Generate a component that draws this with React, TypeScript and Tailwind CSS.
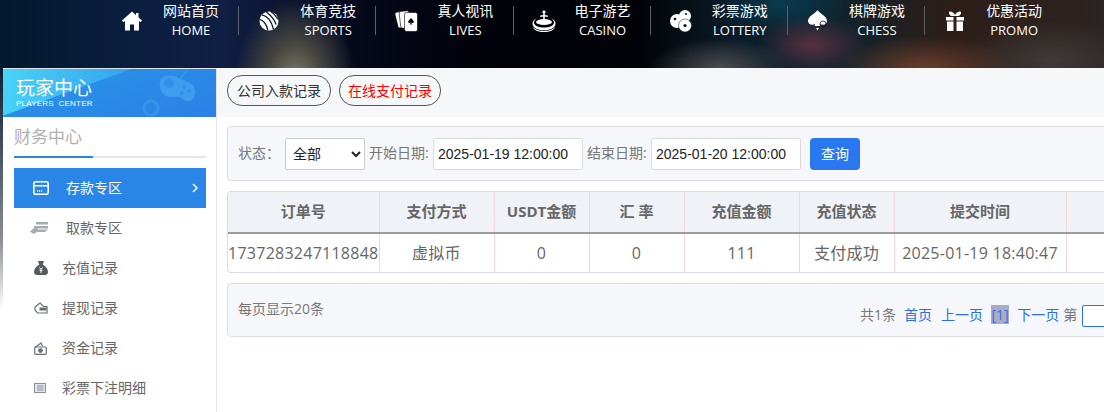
import React from "react";

const W = "fill-white";

const HomeIcon = () => (
  <svg width="20" height="20" viewBox="0 0 20 20" className={W}>
    <path d="M10 .5 0 9.6l1.500 1.600L3 10v9.500h5v-6h4v6h5V10l1.500 1.200L20 9.600 16.500 6.400V2h-2.500v2.200z" />
  </svg>
);
const SportsIcon = () => (
  <svg width="20" height="20" viewBox="0 0 20 20">
    <circle cx="10" cy="10" r="9.500" className={W} />
    <path d="M3 3.800c4.500 1 9.500 5.600 11.500 14.500M7.500 1c3 2.500 8 6.500 9.500 12.500M.8 8.500c3.500 1 6.500 4 8 10.500M12 .8c2.500 1.500 5 4 7 7.500" fill="none" stroke="#0b1022" strokeWidth="1.300" />
  </svg>
);
const LiveIcon = () => (
  <svg width="23" height="22" viewBox="0 0 23 22">
    <rect x="1.500" y="1.500" width="10" height="16" rx="2" transform="rotate(-14 6 10)" className={W} stroke="#000" strokeWidth="0.600" />
    <rect x="5" y="1" width="10" height="17" rx="2" transform="rotate(-7 10 10)" className={W} stroke="#000" strokeWidth="0.600" />
    <rect x="9.500" y="2.500" width="13" height="19" rx="2" className={W} stroke="#000" strokeWidth="0.600" />
    <path d="M16 8c1.200 1.600 2.800 2.400 2.800 3.900 0 1.200-1.600 1.500-2.400.6l.5 2h-1.800l.5-2c-.8.9-2.400.6-2.400-.6 0-1.500 1.600-2.300 2.800-3.900z" fill="#000" />
  </svg>
);
const CasinoIcon = () => (
  <svg width="24" height="22" viewBox="0 0 24 22" className={W}>
    <path d="M12 .5a1.500 1.500 0 0 1 .8 2.800V5l3 .6V7l-3-.4V10h-1.600V6.600l-3 .4V5.600l3-.6V3.300A1.500 1.500 0 0 1 12 .5z" />
    <ellipse cx="12" cy="12" rx="8" ry="3" />
    <path d="M.5 13.500C.5 10.800 3 9 5.500 8.300c-2.200 1-3.600 2.700-3.600 4.200 0 3 4.500 5 10.100 5s10.100-2 10.100-5c0-1.500-1.400-3.200-3.600-4.200 2.500.7 5 2.500 5 5.200 0 4-5 6.800-11.500 6.800S.5 17.500.5 13.500z" />
    <path d="M1 17c2 2.500 6 4 11 4s9-1.500 11-4c-.5 3-5 5-11 5S1.500 20 1 17z" />
  </svg>
);
const LotteryIcon = () => (
  <svg width="22" height="22" viewBox="0 0 22 22">
    <circle cx="15" cy="6" r="6" className={W} />
    <circle cx="7" cy="11" r="7" className={W} />
    <circle cx="15" cy="15.500" r="6.500" className={W} stroke="#06121e" strokeWidth="0.500" />
    <circle cx="5" cy="9" r="1.300" fill="#06121e" />
    <circle cx="16" cy="4" r="1" fill="#06121e" />
    <circle cx="15" cy="15.500" r="1.600" fill="#06121e" />
  </svg>
);
const ChessIcon = () => (
  <svg width="20" height="21" viewBox="0 0 20 21">
    <path d="M9.500 0c2 3.500 9.500 6 9.500 11 0 3.500-4 4.500-7 3l.5 2h-6l.5-2C4 15.500 0 14.500 0 11 0 6 7.500 3.500 9.500 0z" className={W} />
    <circle cx="15" cy="14" r="3" fill="none" stroke="#1d1418" strokeWidth="0.800" />
    <path d="M8 18h3l-1.500 2.500z" className={W} />
  </svg>
);
const GiftIcon = () => (
  <svg width="18" height="20" viewBox="0 0 18 20" className={W}>
    <path d="M4 .5c2 0 4 1.500 5 3.500 1-2 3-3.500 5-3.500 1 0 1.500 1.500.5 3L13 5H5L3.500 3.500C2.500 2 3 .5 4 .5z" />
    <path d="M0 6h7.500v3.500H0zM10.500 6H18v3.500h-7.500zM1 10.500h6.500V20H1zM10.500 10.500H17V20h-6.500z" />
  </svg>
);

const nav = [
  { zh: "网站首页", en: "HOME", icon: <HomeIcon /> },
  { zh: "体育竞技", en: "SPORTS", icon: <SportsIcon /> },
  { zh: "真人视讯", en: "LIVES", icon: <LiveIcon /> },
  { zh: "电子游艺", en: "CASINO", icon: <CasinoIcon /> },
  { zh: "彩票游戏", en: "LOTTERY", icon: <LotteryIcon /> },
  { zh: "棋牌游戏", en: "CHESS", icon: <ChessIcon /> },
  { zh: "优惠活动", en: "PROMO", icon: <GiftIcon /> },
];

const Gamepad = () => (
  <svg width="80" height="48" viewBox="0 0 80 48" fill="#3f9dee" className="absolute right-0 top-0">
    <path d="M26 9c4-3 10-3 15-1l11 5c5 2 8 7 7 12-1 5-4 8-8 7-4-1-5-4-9-4-4-1-8 1-12-1-6-3-9-14-4-18z" />
    <circle cx="33" cy="14" r="5" fill="#2f90ea" />
    <circle cx="48" cy="18" r="2" fill="#2f90ea" />
    <circle cx="53" cy="22" r="2" fill="#2f90ea" />
    <circle cx="46" cy="24" r="2" fill="#2f90ea" />
    <path d="M44 9c3-1 2-4 5-5l3-2" fill="none" stroke="#3f9dee" strokeWidth="1.200" />
    <circle cx="15" cy="39" r="7" fill="none" stroke="#3794ea" strokeWidth="3" />
  </svg>
);

const CardIcon = () => (
  <svg width="16" height="14" viewBox="0 0 16 14">
    <rect x="0.800" y="0.800" width="14.400" height="12.400" rx="2" fill="none" stroke="#fff" strokeWidth="1.600" />
    <path d="M1 4h14v1.500H1zM4 9h1v2H4zM6 9h1v2H6zM8 9h1v2H8z" fill="#fff" />
  </svg>
);
const HandIcon = () => (
  <svg width="19" height="12" viewBox="0 0 19 12" fill="#a7acb2">
    <path d="M6 0h12v2.500H6zM4 4h14v2.500H8L4 6zM0 9.500l4-3.500h3l1 1.500h7L18 7l-3 3H7l-3.500 2z" />
  </svg>
);
const BagIcon = () => (
  <svg width="14" height="14" viewBox="0 0 14 14">
    <path d="M4 0h6L8.800 3.500c3 1.500 5.200 4.500 5.200 7.500 0 2-1.500 3-3 3H3c-1.500 0-3-1-3-3 0-3 2.200-6 5.200-7.500z" fill="#555a5f" />
    <path d="M5.500 6.500 7 8.500l1.500-2M5.500 9.300h3M7 8.500v3.500" stroke="#fff" strokeWidth="1" fill="none" />
  </svg>
);
const WithdrawIcon = () => (
  <svg width="14" height="12" viewBox="0 0 14 12" fill="none" stroke="#6a6f74" strokeWidth="1.200">
    <path d="M1 5 6 1l3.500 3.500H13v6.500H3.500L1 8z" />
    <rect x="5.500" y="5.500" width="7" height="3" fill="#6a6f74" stroke="none" />
  </svg>
);
const FundIcon = () => (
  <svg width="13" height="13" viewBox="0 0 13 13" fill="none" stroke="#6a6f74" strokeWidth="1.200">
    <path d="M1 5.500 7 1l1.500 3" />
    <rect x="0.700" y="5" width="11.600" height="7.300" rx="1" />
    <circle cx="6.500" cy="8.600" r="1.800" fill="#6a6f74" />
  </svg>
);
const ListIcon = () => (
  <svg width="12" height="10" viewBox="0 0 12 10" fill="none" stroke="#8a9097" strokeWidth="1">
    <rect x="0.500" y="0.500" width="11" height="9" fill="#e3e6ea" />
    <path d="M3 3h6.500M3 5h6.500M3 7h6.500" />
  </svg>
);

const menu = [
  { t: "取款专区", icon: <HandIcon />, tall: true },
  { t: "充值记录", icon: <BagIcon /> },
  { t: "提现记录", icon: <WithdrawIcon /> },
  { t: "资金记录", icon: <FundIcon /> },
  { t: "彩票下注明细", icon: <ListIcon /> },
];

const cols = [151, 115, 95, 95, 115, 95, 172, 120];
const heads = ["订单号", "支付方式", "USDT金额", "汇 率", "充值金额", "充值状态", "提交时间", ""];
const cells = ["1737283247118848", "虚拟币", "0", "0", "111", "支付成功", "2025-01-19 18:40:47", ""];

export default function App() {
  return (
    <div className="w-[1104px] h-[412px] overflow-hidden flex flex-col bg-white text-[14px] text-[#666] font-['Open_Sans','Noto_Sans_CJK_SC',sans-serif]">
      <header className="h-[68px] shrink-0 pl-[102px] flex items-start bg-[radial-gradient(ellipse_60px_80px_at_295px_78px,#7a7a6a,#45453f_45%,transparent),radial-gradient(ellipse_70px_30px_at_720px_68px,#4c4c4c,transparent),radial-gradient(ellipse_55px_30px_at_812px_45px,#57303f,transparent),radial-gradient(ellipse_90px_35px_at_925px_70px,#6b3f2c,transparent),radial-gradient(ellipse_90px_40px_at_1050px_60px,#3f3a38,transparent),radial-gradient(ellipse_70px_30px_at_780px_5px,#0b3a50,transparent),linear-gradient(90deg,#03192e_0%,#0a1e3e_12%,#101f44_20%,#06091c_32%,#01020a_42%,#020308_58%,#0b1a26_66%,#0a2430_74%,#2d1d18_86%,#2b2422_100%)]">
        {nav.map((n, i) => (
          <div key={n.en} className={`w-[137.2px] h-[29px] mt-[6px] flex items-center ${i < 6 ? "border-r border-[#5d6168]" : ""}`}>
            <div className="w-[60px] flex justify-center shrink-0">{n.icon}</div>
            <div className="w-[58px] flex flex-col items-center text-white">
              <span className="text-[14px] leading-[18px] whitespace-nowrap">{n.zh}</span>
              <span className="text-[13px] leading-[18px] mt-[1px]">{n.en}</span>
            </div>
          </div>
        ))}
      </header>

      <div className="flex flex-1 min-h-0">
        <div className="w-[3px] shrink-0 bg-gradient-to-b from-[#0a2034] via-[#8b8f96] via-50% to-white to-70%" />
        <aside className="w-[214px] shrink-0 bg-white border-r border-[#e6e6e6] border-t-[1px] border-t-[#dfe6ee]">
          <div className="relative h-[48px] overflow-hidden bg-[linear-gradient(160deg,transparent_37%,#2a8ee8_37.5%,#2a80e6_100%),linear-gradient(100deg,#48d4f8,#35a0ee_60%)] text-white pl-[13px] pt-[7px]">
            <Gamepad />
            <div className="relative text-[19px] leading-[22px] font-['Noto_Sans_CJK_SC',sans-serif]">玩家中心</div>
            <div className="relative text-[8px] leading-[10px] mt-[1px] tracking-[0.2px] font-['Liberation_Sans',sans-serif]">PLAYERS&nbsp; CENTER</div>
          </div>
          <div className="ml-[11px] mr-[10px] h-[41px] border-b-2 border-[#e4e6e8] relative">
            <span className="absolute left-0 top-[9px] text-[17px] leading-[22px] text-[#b0b0b0]">财务中心</span>
            <div className="absolute left-0 -bottom-[2px] w-[79px] h-[2px] bg-[#2a86e6]" />
          </div>
          <div className="ml-[11px] mr-[10px] mt-[10px] h-[40px] bg-[#2a86e6] flex items-center text-white">
            <div className="w-[52px] pl-[19px] shrink-0"><CardIcon /></div>
            <span className="mb-[2px]">存款专区</span>
            <svg width="6" height="10" viewBox="0 0 6 10" className="ml-auto mr-[8px]" fill="none" stroke="#fff" strokeWidth="1.500">
              <path d="M1 1l4 4-4 4" />
            </svg>
          </div>
          {menu.map((m) => (
            <div key={m.t} className="ml-[11px] mr-[10px] h-[40px] flex items-center">
              <div className={`${m.tall ? "w-[52px] pl-[16px]" : "w-[48px] pl-[20px]"} shrink-0 flex`}>{m.icon}</div>
              <span className="mb-[2px]">{m.t}</span>
            </div>
          ))}
        </aside>

        <main className="flex-1 min-w-0 overflow-hidden">
          <div className="h-[49px] bg-[#f5f7f9] pl-[10px] pt-[7px] flex items-start gap-[8px]">
            <button className="h-[31px] w-[104px] rounded-[15px] border border-[#555] text-[#333] text-[14px]">公司入款记录</button>
            <button className="h-[31px] w-[102px] rounded-[15px] border border-[#555] text-[#f00] text-[14px]">在线支付记录</button>
          </div>

          <div className="ml-[10px] w-[1000px]">
            <div className="mt-[9px] h-[55px] rounded-[4px] border border-[#dcdde0] bg-[#f5f7fa] flex items-center pl-[10px]">
              <span className="w-[47px] shrink-0 text-[#777] mb-[2px]">状态：</span>
              <select className="w-[80px] h-[32px] bg-white border border-[#ccc] rounded-[2px] text-[#222] text-[14px] pl-[3px]">
                <option>全部</option>
              </select>
              <span className="ml-[4px] w-[64px] shrink-0 text-[#777] whitespace-nowrap mb-[2px]">开始日期:</span>
              <input readOnly value="2025-01-19 12:00:00" className="w-[150px] h-[32px] bg-white border border-[#dcdcdf] rounded-[2px] pl-[4px] text-[#222] text-[14px] font-['Liberation_Sans',sans-serif]" />
              <span className="ml-[4px] w-[64px] shrink-0 text-[#777] whitespace-nowrap mb-[2px]">结束日期:</span>
              <input readOnly value="2025-01-20 12:00:00" className="w-[150px] h-[32px] bg-white border border-[#dcdcdf] rounded-[2px] pl-[4px] text-[#222] text-[14px] font-['Liberation_Sans',sans-serif]" />
              <button className="ml-[9px] w-[50px] h-[32px] bg-[#2a78ef] text-white rounded-[4px] text-[14px]">查询</button>
            </div>

            <div className="mt-[10px] h-[82px] rounded-[4px] border border-[#d9dce0] overflow-hidden">
              <table className="table-fixed border-collapse w-[958px]">
                <colgroup>
                  {cols.map((c, i) => <col key={i} style={{ width: c }} />)}
                </colgroup>
                <thead>
                  <tr className="h-[41px] bg-[#eff2f6] border-b-2 border-[#a09a9a]">
                    {heads.map((h, i) => (
                      <th key={i} className="text-[15px] font-bold text-[#666] border-r border-[#f8d4d4] p-0 pb-[2px]">{h}</th>
                    ))}
                  </tr>
                </thead>
                <tbody>
                  <tr className="h-[39px]">
                    {cells.map((c, i) => (
                      <td key={i} className="text-[16px] tracking-[0.25px] text-center text-[#666] border-r border-[#f8d4d4] p-0 whitespace-nowrap">{c}</td>
                    ))}
                  </tr>
                </tbody>
              </table>
            </div>

            <div className="mt-[10px] h-[54px] rounded-[4px] border border-[#dcdfe3] bg-[#f5f7fa] flex items-start pl-[10px] pt-[15px]">
              <span className="text-[#777] leading-[20px] shrink-0">每页显示20条</span>
              <div className="ml-[536px] flex items-center text-[#777] leading-[20px] h-[22px] mt-[6px] whitespace-nowrap">
                <span className="mb-[3px]">共1条</span>
                <a className="ml-[8px] mb-[3px] text-[#2b6fe8]">首页</a>
                <a className="ml-[9px] mb-[3px] text-[#2b6fe8]">上一页</a>
                <a className="ml-[8px] mb-[3px] px-[0.5px] bg-[#a9adc2] text-[#2b6fe8] h-[19px] leading-[19px]">[1]</a>
                <a className="ml-[8px] mb-[3px] text-[#2b6fe8]">下一页</a>
                <span className="ml-[4px] mb-[3px]">第</span>
                <input readOnly className="ml-[5px] w-[40px] h-[22px] bg-white border border-[#2b6fe8] rounded-[2px] shrink-0" />
              </div>
            </div>
          </div>
        </main>
      </div>
    </div>
  );
}
